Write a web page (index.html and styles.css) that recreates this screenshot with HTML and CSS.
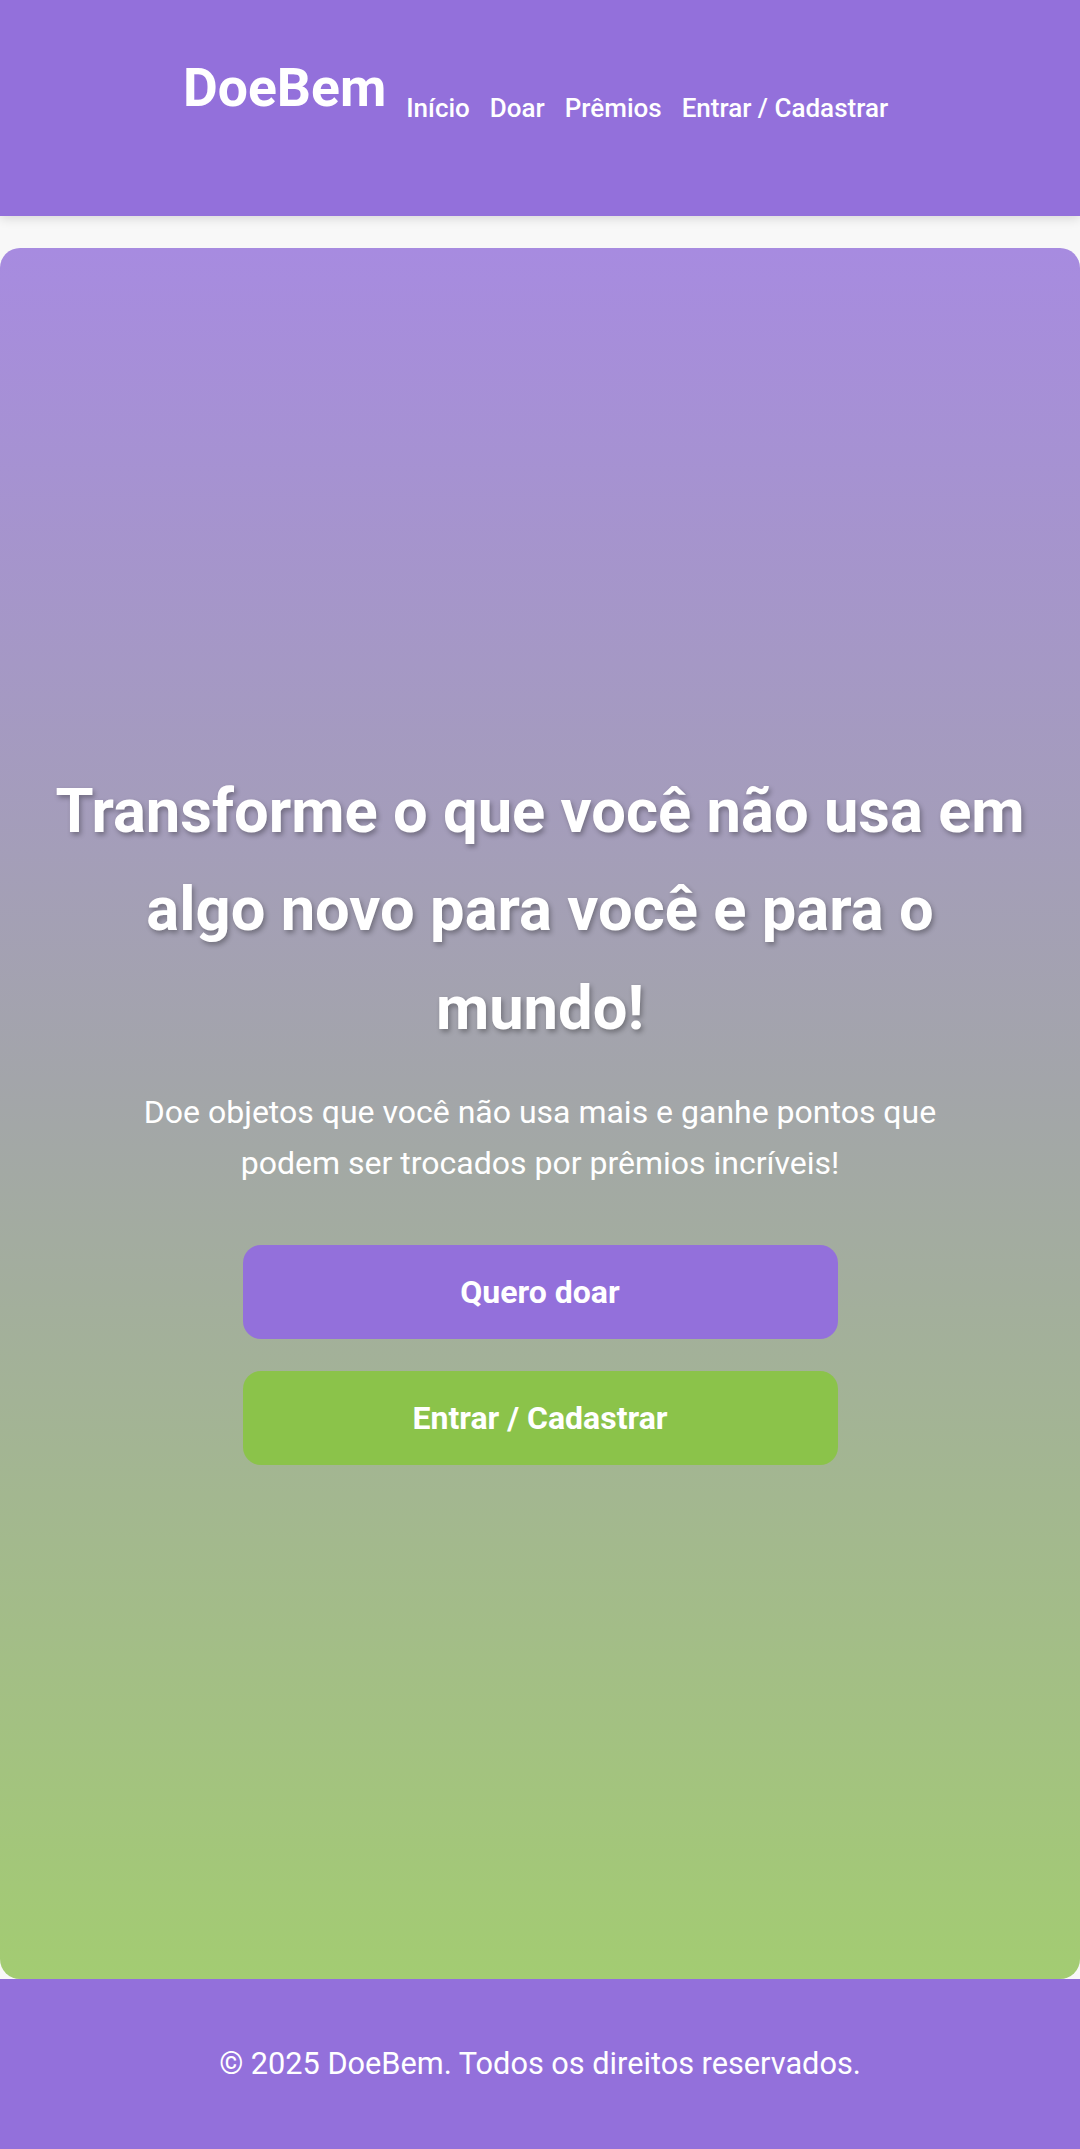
FILE: index.html
```html
<!DOCTYPE html>
<html lang="pt-BR">
<head>
<meta charset="utf-8">
<title>DoeBem</title>
<link rel="stylesheet" href="styles.css">
</head>
<body>
<header class="site-header">
  <div class="header-inner">
    <div class="logo">DoeBem</div>
    <nav class="nav">
      <a href="#">Início</a>
      <a href="#">Doar</a>
      <a href="#">Prêmios</a>
      <a href="#">Entrar / Cadastrar</a>
    </nav>
  </div>
</header>
<main class="main">
  <section class="hero">
    <h1 class="hero-title">Transforme o que você não usa em algo novo para você e para o mundo!</h1>
    <p class="hero-text">Doe objetos que você não usa mais e ganhe pontos que podem ser trocados por prêmios incríveis!</p>
    <div class="hero-actions">
      <a class="btn btn-purple" href="#">Quero doar</a>
      <a class="btn btn-green" href="#">Entrar / Cadastrar</a>
    </div>
  </section>
</main>
<footer class="site-footer">
  <p>© 2025 DoeBem. Todos os direitos reservados.</p>
</footer>
</body>
</html>
```

FILE: styles.css
```css
* { box-sizing: border-box; }
html, body { margin: 0; padding: 0; }
body {
  font-family: Roboto, "Liberation Sans", Arial, sans-serif;
  background: #f8f8f8;
  color: #fff;
}
.site-header {
  background: #9370db;
  height: 216px;
  box-shadow: 0 3px 10px rgba(0, 0, 0, 0.12);
  position: relative;
  z-index: 1;
}
.header-inner {
  display: flex;
  align-items: flex-start;
  padding: 57px 0 0 183px;
}
.logo {
  font-size: 53.5px;
  font-weight: 700;
  line-height: 62px;
  margin-right: 20px;
}
.nav {
  display: flex;
  gap: 20px;
  margin-top: 36px;
}
.nav a {
  color: #fff;
  text-decoration: none;
  font-size: 26px;
  font-weight: 500;
  line-height: 30px;
}
.main {
  padding-top: 32px;
}
.hero {
  height: 1731px;
  border-radius: 20px;
  background: linear-gradient(to bottom, #a78be0 0%, #a3a5aa 48%, #a3cc72 100%);
  display: flex;
  flex-direction: column;
  align-items: center;
  justify-content: center;
  text-align: center;
  padding: 0 40px;
}
.hero-title {
  margin: 0;
  font-size: 61.5px;
  font-weight: 700;
  line-height: 98.4px;
  text-shadow: 2px 3px 5px rgba(0, 0, 0, 0.3);
}
.hero-text {
  margin: 30px 0 0;
  max-width: 840px;
  font-size: 32px;
  line-height: 51.2px;
}
.hero-actions {
  margin-top: 56px;
  width: 595px;
  display: flex;
  flex-direction: column;
  gap: 32px;
}
.btn {
  display: block;
  color: #fff;
  text-decoration: none;
  font-size: 32px;
  font-weight: 700;
  line-height: 38px;
  padding: 28px 0;
  border-radius: 18px;
}
.btn-purple { background: #9370db; }
.btn-green { background: #8bc34a; }
.site-footer {
  background: #9370db;
  height: 170px;
  display: flex;
  align-items: center;
  justify-content: center;
}
.site-footer p {
  margin: 0;
  font-size: 30.7px;
  line-height: 36px;
}
```
